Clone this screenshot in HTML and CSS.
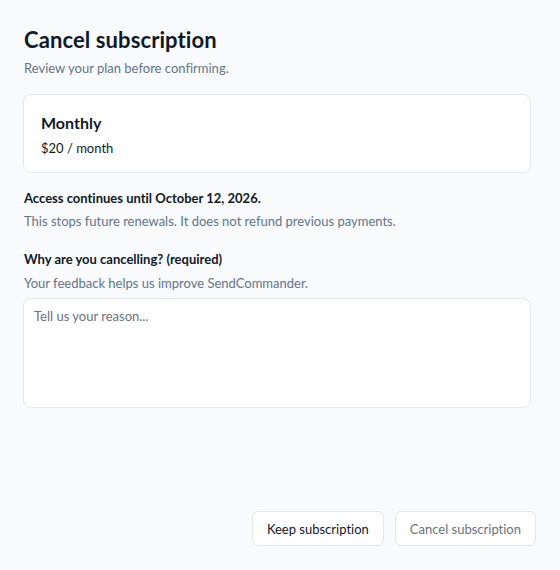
FILE: index.html
```html
<!DOCTYPE html>
<html>
<head>
<meta charset="utf-8">
<link rel="stylesheet" href="styles.css">
</head>
<body>
<div class="page">
  <main class="content">
    <h1 class="title">Cancel subscription</h1>
    <p class="subtitle">Review your plan before confirming.</p>
    <section class="card">
      <div class="plan">Monthly</div>
      <div class="price">$20 / month</div>
    </section>
    <div class="notice">
      <div class="strong">Access continues until October 12, 2026.</div>
      <div class="muted">This stops future renewals. It does not refund previous payments.</div>
    </div>
    <div class="field">
      <label class="strong" for="reason">Why are you cancelling? (required)</label>
      <div class="muted muted-field">Your feedback helps us improve SendCommander.</div>
      <textarea id="reason" class="textarea" placeholder="Tell us your reason..."></textarea>
    </div>
  </main>
  <footer class="actions">
    <button class="btn btn-keep">Keep subscription</button>
    <button class="btn btn-cancel">Cancel subscription</button>
  </footer>
</div>
</body>
</html>
```
FILE: styles.css
```css
* { box-sizing: border-box; }
html, body { margin: 0; height: 100%; }
body {
  background: #f8fafc;
  font-family: "Lato", "Noto Sans", sans-serif;
  font-variant-ligatures: none;
  color: #0f172a;
}
.page {
  height: 570px;
  display: flex;
  flex-direction: column;
  padding: 27px 24px 24px 24px;
}
.content {
  flex: 1;
  padding-right: 5px;
  display: flex;
  flex-direction: column;
}
.title {
  margin: 0;
  font-size: 22px;
  font-weight: 700;
  line-height: 26px;
  color: #111827;
  letter-spacing: 0.1px;
}
.subtitle {
  margin: 6px 0 0;
  font-size: 13px;
  line-height: 18px;
  color: #64748b;
}
.card {
  margin-top: 17px;
  margin-left: -1px;
  background: #fff;
  border: 1px solid #e5e7eb;
  border-radius: 8px;
  padding: 18px 17px 15px;
}
.plan {
  font-size: 16px;
  font-weight: 700;
  line-height: 20px;
  color: #111827;
}
.price {
  margin-top: 6px;
  font-size: 13px;
  line-height: 18px;
  color: #111827;
}
.notice { margin-top: 16px; }
.strong {
  display: block;
  font-size: 13px;
  font-weight: 700;
  line-height: 18px;
  color: #111827;
}
.muted {
  margin-top: 5px;
  font-size: 13px;
  line-height: 18px;
  color: #64748b;
}
.muted-field { margin-top: 6px; }
.field { margin-top: 20px; display: flex; flex-direction: column; }
.textarea {
  margin-top: 6px;
  margin-left: -1px;
  height: 110px;
  resize: none;
  background: #fff;
  border: 1px solid #e5e7eb;
  border-radius: 8px;
  padding: 9px 10px;
  font-family: inherit;
  font-size: 13px;
  color: #111827;
}
.textarea::placeholder { color: #6b7280; }
.actions {
  display: flex;
  justify-content: flex-end;
  gap: 11px;
}
.btn {
  height: 35px;
  padding: 0 14px;
  background: #fff;
  border: 1px solid #e5e7eb;
  border-radius: 6px;
  font-family: inherit;
  font-variant-ligatures: none;
  font-size: 13px;
}
.btn-keep { color: #111827; }
.btn-cancel { color: #6b7280; }
```
